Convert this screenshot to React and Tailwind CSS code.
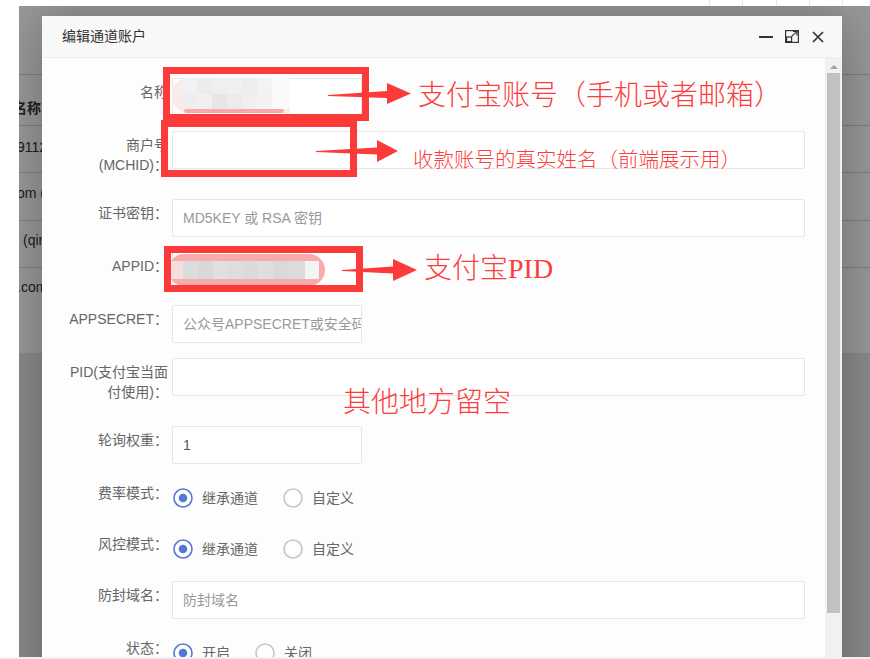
import React from "react";

const FONT = { fontFamily: '"Liberation Sans", "Noto Sans CJK SC", sans-serif' };
const ANN = { fontFamily: '"Liberation Serif", "Noto Sans CJK SC", serif' };

function Label({ children }) {
  return (
    <div className="w-[126px] shrink-0 pl-[24px] pt-[4px] pb-[9px] text-right text-[14px] leading-[20px] text-[#666]">
      {children}
    </div>
  );
}

function Input({ short, placeholder, value }) {
  return (
    <div
      className={
        (short ? "w-[190px] " : "flex-1 mr-[20px] ") +
        "ml-[4px] h-[38px] border border-[#e6e6e6] rounded-[2px] bg-white pl-[10px] flex items-center text-[14px] overflow-hidden whitespace-nowrap"
      }
    >
      {value ? (
        <span className="text-[#555]">{value}</span>
      ) : (
        <span className="text-[#999]">{placeholder}</span>
      )}
    </div>
  );
}

function Radio({ checked, text }) {
  return (
    <div className="flex items-center mr-[25px]">
      <svg width="20" height="20" viewBox="0 0 20 20">
        <circle
          cx="10"
          cy="10"
          r="9"
          fill="white"
          stroke={checked ? "#5577d6" : "#c6c6c6"}
          strokeWidth="1.6"
        />
        {checked && <circle cx="10" cy="10" r="4.3" fill="#5577d6" />}
      </svg>
      <span className="ml-[9px] text-[14px] leading-[20px] text-[#666]">{text}</span>
    </div>
  );
}

function Row({ label, children }) {
  return (
    <div className="flex items-start mb-[15px]">
      <Label>{label}</Label>
      {children}
    </div>
  );
}

function RadioRow({ label, a, b }) {
  return (
    <div className="flex items-start mb-[15px]">
      <Label>{label}</Label>
      <div className="ml-[5px] h-[36px] pt-[2px] flex items-center">
        <Radio checked text={a} />
        <Radio text={b} />
      </div>
    </div>
  );
}

export default function App() {
  return (
    <div className="relative w-[870px] h-[659px] overflow-hidden bg-white" style={FONT}>
      {/* top unshaded strip */}
      <div className="h-[6px] flex">
        <div className="w-[709px]" />
        <div className="w-[33px] border-l border-[#e6e6e6]" />
        <div className="w-[34px] border-l border-[#e6e6e6]" />
        <div className="w-[33px] border-l border-[#e6e6e6]" />
        <div className="w-[33px] border-l border-[#e6e6e6]" />
        <div className="flex-1 border-l border-[#e6e6e6]" />
      </div>

      <div className="flex h-[651px]">
        <div className="w-[19px] bg-white" />
        <div className="relative flex-1 overflow-hidden">
          {/* underlying page */}
          <div className="flex flex-col h-full bg-[#e8e8e8] text-[14px] leading-[20px] text-[#333]">
            <div className="bg-white h-[68px]" />
            <div className="bg-white h-[51px] border-t border-[#d2d2d2] pt-[23px] font-bold">
              <div className="ml-[-6px] whitespace-nowrap">名称</div>
            </div>
            <div className="bg-white h-[47px] border-t border-[#d2d2d2] pt-[11px]">
              <div className="ml-[-2px] whitespace-nowrap">91120190001</div>
            </div>
            <div className="bg-white h-[48px] border-t border-[#d2d2d2] pt-[10px]">
              <div className="ml-[-2px] whitespace-nowrap">om (test)</div>
            </div>
            <div className="bg-white h-[47px] border-t border-[#d2d2d2] pt-[9px]">
              <div className="ml-[4px] whitespace-nowrap">(qinghua)</div>
            </div>
            <div className="bg-white h-[86px] border-t border-[#d2d2d2] pt-[9px]">
              <div className="ml-[-2px] whitespace-nowrap">.com</div>
            </div>
          </div>

          {/* shade */}
          <div className="absolute inset-0 bg-black/40" />

          {/* dialog */}
          <div className="absolute left-[23px] top-[10px] w-[800px] h-[700px] bg-white shadow-[1px_1px_50px_rgba(0,0,0,0.3)] flex flex-col">
            <div className="h-[42px] shrink-0 border-b border-[#eee] bg-[#f8f8f8] flex items-center pl-[20px] pr-[18px] text-[14px] text-[#333]">
              <div className="flex-1">编辑通道账户</div>
              <div className="w-[14px] h-[2px] bg-[#333] mt-[1px]" />
              <svg className="ml-[12px]" width="14" height="13" viewBox="0 0 14 13" fill="none" stroke="#333" strokeWidth="1.2">
                <rect x="0.6" y="0.6" width="12.8" height="11.8" />
                <rect x="1.6" y="7" width="5" height="4.6" />
                <path d="M6.6 6.4 L12 1.4 M8 1.4 H12 V5.4" />
              </svg>
              <svg className="ml-[13px]" width="12" height="12" viewBox="0 0 12 12" stroke="#333" strokeWidth="1.7">
                <path d="M1 1 L11 11 M11 1 L1 11" />
              </svg>
            </div>

            <div className="flex-1 flex bg-[#fdfdfd] overflow-hidden">
              <div className="flex-1 pt-[20px]">
                <Row label="名称">
                  <Input short placeholder="" />
                </Row>
                <Row label="商户号(MCHID)：">
                  <Input placeholder="" />
                </Row>
                <Row label="证书密钥：">
                  <Input placeholder="MD5KEY 或 RSA 密钥" />
                </Row>
                <Row label="APPID：">
                  <Input short placeholder="" />
                </Row>
                <Row label="APPSECRET：">
                  <Input short placeholder="公众号APPSECRET或安全码" />
                </Row>
                <Row label="PID(支付宝当面付使用)：">
                  <Input placeholder="" />
                </Row>
                <Row label="轮询权重：">
                  <Input short value="1" />
                </Row>
                <RadioRow label="费率模式：" a="继承通道" b="自定义" />
                <RadioRow label="风控模式：" a="继承通道" b="自定义" />
                <Row label="防封域名：">
                  <Input placeholder="防封域名" />
                </Row>
                <RadioRow label="状态：" a="开启" b="关闭" />
              </div>
              <div className="w-[17px] shrink-0 bg-[#f1f1f1] flex flex-col items-center">
                <div className="mt-[7px] w-0 h-0 border-l-[4px] border-r-[4px] border-b-[4px] border-l-transparent border-r-transparent border-b-[#a3a3a3]" />
                <div className="mt-[4px] w-[13px] h-[540px] bg-[#c1c1c1]" />
              </div>
            </div>
          </div>
        </div>
      </div>
      <div className="h-[2px] bg-[#f0f0f4]" />

      {/* annotation: blurred values */}
      <div className="absolute left-[172px] top-[78px] w-[118px] h-[35px] overflow-hidden rounded-l-[16px] bg-[#fbeaea] flex flex-col">
        <div className="flex h-[16px] ml-[10px]">
          <div className="w-[15px] bg-[#f1f1f1]" />
          <div className="w-[15px] bg-[#ececec]" />
          <div className="w-[15px] bg-[#efefef]" />
          <div className="w-[15px] bg-[#f0f0f0]" />
          <div className="w-[15px] bg-[#ededed]" />
          <div className="w-[15px] bg-[#f3f3f3]" />
          <div className="flex-1 bg-[#fafafa]" />
        </div>
        <div className="flex h-[15px] ml-[10px]">
          <div className="w-[15px] bg-[#eeeeee]" />
          <div className="w-[15px] bg-[#f0f0f0]" />
          <div className="w-[15px] bg-[#e6e6e6]" />
          <div className="w-[15px] bg-[#ebebeb]" />
          <div className="w-[15px] bg-[#efefef]" />
          <div className="w-[15px] bg-[#f2f2f2]" />
          <div className="flex-1 bg-[#fafafa]" />
        </div>
        <div className="h-[4px] ml-[12px] mr-[6px] bg-[#f8a8a8] rounded-full" />
      </div>
      <div className="absolute left-[168px] top-[254px] w-[157px] h-[32px] rounded-full bg-[#f9abab] flex items-center">
        <div className="ml-[3px] w-[12px] h-[18px] bg-[#f6dede]" />
        <div className="w-[122px] h-[18px] flex">
          <div className="w-[15px] bg-[#dcdcdc]" />
          <div className="w-[15px] bg-[#d8d8d8]" />
          <div className="w-[15px] bg-[#e0e0e0]" />
          <div className="w-[15px] bg-[#dddddd]" />
          <div className="w-[15px] bg-[#dadada]" />
          <div className="w-[15px] bg-[#dedede]" />
          <div className="w-[15px] bg-[#d9d9d9]" />
          <div className="flex-1 bg-[#dbdbdb]" />
        </div>
        <div className="w-[14px] h-[18px] bg-[#f4f4f4]" />
      </div>

      {/* annotation: red boxes */}
      <div className="absolute left-[163px] top-[67px] w-[206px] h-[54px] border-[7px] border-[#fd3a3a]" />
      <div className="absolute left-[161px] top-[120px] w-[196px] h-[57px] border-[7px] border-[#fd3a3a]" />
      <div className="absolute left-[164px] top-[246px] w-[199px] h-[46px] border-[7px] border-[#fd3a3a]" />

      {/* annotation: arrows */}
      <svg className="absolute left-0 top-0 pointer-events-none" width="870" height="659" viewBox="0 0 870 659">
        <polygon fill="#fd3a3a" points="328,95 387,91 387,83 411,93.5 387,104 387,98 328,96" />
        <polygon fill="#fd3a3a" points="316,151 377,147.5 377,140 398,151 377,162 377,154.5 316,152" />
        <polygon fill="#fd3a3a" points="342,270 393,266.5 393,259 417,270 393,281 393,273.5 342,271" />
      </svg>

      {/* annotation: texts */}
      <div className="absolute left-[418px] top-[82px] text-[28px] leading-[28px] text-[#fb3d3d] whitespace-nowrap font-light" style={ANN}>
        支付宝账号（手机或者邮箱）
      </div>
      <div className="absolute left-[413px] top-[150px] text-[20.5px] leading-[20px] text-[#fb3d3d] whitespace-nowrap font-light" style={ANN}>
        收款账号的真实姓名（前端展示用）
      </div>
      <div className="absolute left-[424px] top-[255px] text-[28px] leading-[28px] text-[#fb3d3d] whitespace-nowrap font-light" style={ANN}>
        支付宝PID
      </div>
      <div className="absolute left-[343px] top-[389px] text-[28px] leading-[28px] text-[#fb3d3d] whitespace-nowrap font-light" style={ANN}>
        其他地方留空
      </div>
    </div>
  );
}
